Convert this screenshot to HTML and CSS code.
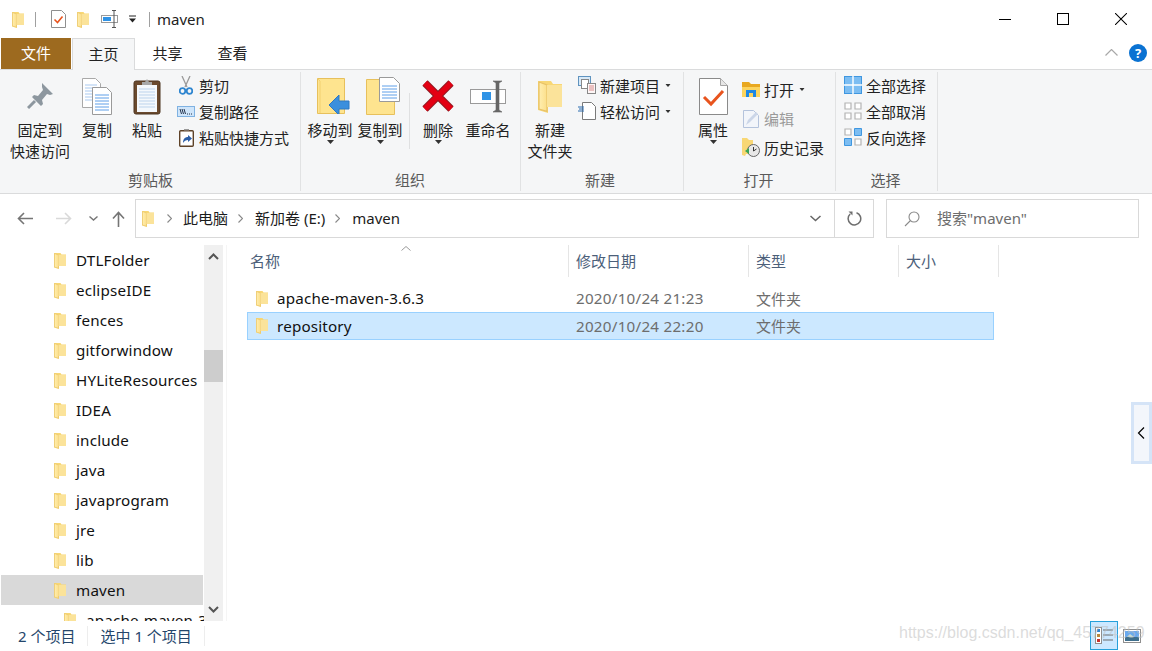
FILE: index.html
```html
<!DOCTYPE html>
<html lang="zh">
<head>
<meta charset="utf-8">
<title>maven</title>
<link rel="stylesheet" href="styles.css">
</head>
<body>
<svg class="defs" width="0" height="0" aria-hidden="true">
  <defs>
    <linearGradient id="fg" x1="0" x2="1" y1="0" y2="0"><stop offset="0" stop-color="#ffeeb0"/><stop offset="1" stop-color="#fcdf8a"/></linearGradient>
    <symbol id="folder" viewBox="0 0 12 17">
      <path d="M0 1h6.500l1 1.500H12V14H5v3L0 15.500z" fill="#f8d775"/>
      <path d="M.5 1.500 4.500 3v13.200L.5 15z" fill="url(#fg)" stroke="#e8c268" stroke-width=".6"/>
      <path d="M4.500 3H12V14H4.500z" fill="#fbe39a"/>
    </symbol>
    <symbol id="down" viewBox="0 0 7 4"><path d="M0 0h7L3.500 4z" fill="#333"/></symbol>
  </defs>
</svg>
<div class="window">

  <header class="titlebar">
    <svg class="ic-folder" width="12" height="17"><use href="#folder"/></svg>
    <span class="tb-sep"></span>
    <svg class="qa-check" width="15" height="18" viewBox="0 0 15 18"><path d="M.5.500h10l4 4v13H.500z" fill="#fff" stroke="#8f8f8f"/><path d="M3.500 9.500l3 3 5-6" fill="none" stroke="#e8541e" stroke-width="1.600"/></svg>
    <svg class="qa-folder" width="12" height="17"><use href="#folder"/></svg>
    <svg class="qa-rename" width="18" height="18" viewBox="0 0 18 18"><rect x=".5" y="5.500" width="16" height="7" fill="#fff" stroke="#9a9a9a"/><rect x="2" y="7" width="8" height="4" fill="#2f93e6"/><path d="M11 .5h4M11 17.500h4M13 1v16" stroke="#555" fill="none"/></svg>
    <svg class="qa-drop" width="7" height="8" viewBox="0 0 7 8"><path d="M0 1h7" stroke="#222"/><path d="M0 3.500h7L3.500 7.500z" fill="#222"/></svg>
    <span class="tb-sep tb-sep2"></span>
    <span class="title">maven</span>
    <div class="winctl">
      <svg width="12" height="12" viewBox="0 0 12 12"><path d="M0 6.500h12" stroke="#000"/></svg>
      <svg width="12" height="12" viewBox="0 0 12 12"><rect x=".5" y=".5" width="11" height="11" fill="none" stroke="#000"/></svg>
      <svg width="12" height="12" viewBox="0 0 12 12"><path d="M0 0l12 12M12 0 0 12" stroke="#000" stroke-width="1.050"/></svg>
    </div>
  </header>

  <nav class="tabs">
    <span class="tab tab-file">文件</span>
    <span class="tab tab-on">主页</span>
    <span class="tab">共享</span>
    <span class="tab">查看</span>
    <span class="tabs-fill"></span>
    <svg class="collapse" width="13" height="7" viewBox="0 0 13 7"><path d="M.5 6.500l6-6 6 6" fill="none" stroke="#a8a8a8" stroke-width="1.200"/></svg>
    <span class="help">?</span>
  </nav>

  <section class="ribbon">
    <div class="group g1">
      <div class="g-body">
        <div class="big w64">
          <span class="big-ic"><svg width="26" height="27" viewBox="0 0 26 27"><path d="M15 0l11 11-3 1-3-1-5 6 1 4-2 2L5 14l2-2 4 1 5-6-1-3z" fill="#8d979f"/><path d="M8 18 1 25" stroke="#8d979f" stroke-width="3"/></svg></span>
          <span class="big-t">固定到<br>快速访问</span>
        </div>
        <div class="big">
          <span class="big-ic"><svg width="30" height="37" viewBox="0 0 30 37"><path d="M.5.500h13l5 5v24H.500z" fill="#fff" stroke="#a9a9a9"/><path d="M3 7h12M3 10h12M3 13h12M3 16h12M3 19h12M3 22h12" stroke="#a9c9f0"/><path d="M10.500 9.500h14l5 5v22h-19z" fill="#fff" stroke="#9a9a9a"/><path d="M13 17h14M13 20h14M13 23h14M13 26h14M13 29h14M13 32h14" stroke="#5e9fe8"/></svg></span>
          <span class="big-t">复制</span>
        </div>
        <div class="big">
          <span class="big-ic"><svg width="28" height="37" viewBox="0 0 28 37"><rect x="1" y="3" width="26" height="33" rx="2" fill="#6b4a2e" stroke="#4d3520"/><rect x="4" y="7" width="20" height="27" fill="#f4f8fc"/><path d="M6 11h16M6 14h16M6 17h16M6 20h16M6 23h16M6 26h16M6 29h16" stroke="#bcd3ec"/><path d="M9 7V4h3l2-3 2 3h3v3z" fill="#a8a8a8"/></svg></span>
          <span class="big-t">粘贴</span>
        </div>
        <div class="smalls s-26 s-g1">
          <div class="sm"><span class="sm-ic"><svg width="14" height="19" viewBox="0 0 14 19"><path d="M3 0l5 11M11 0 6 11" stroke="#9a9a9a" stroke-width="1.300"/><circle cx="3.500" cy="15" r="2.800" fill="none" stroke="#2f86d0" stroke-width="1.800"/><circle cx="10.500" cy="15" r="2.800" fill="none" stroke="#2f86d0" stroke-width="1.800"/></svg></span>剪切</div>
          <div class="sm"><span class="sm-ic"><svg width="18" height="11" viewBox="0 0 18 11"><rect x=".5" y=".5" width="17" height="10" fill="#cfe5fa" stroke="#7fb2e2"/><path d="M3 3l1.500 5M5 3l1.500 5M7 3l1.500 5" stroke="#24324a" fill="none"/><path d="M10 8h1M12 8h1M14 8h1" stroke="#24324a"/></svg></span>复制路径</div>
          <div class="sm"><span class="sm-ic"><svg width="15" height="19" viewBox="0 0 15 19"><rect x=".7" y="2.700" width="13.600" height="15.600" rx="1" fill="#fff" stroke="#5e4228" stroke-width="1.400"/><path d="M5 2.500V1h5v1.500z" fill="#999"/><path d="M4 15c0-4 2-6 5-6V7l4 3.500L9 14v-2c-2 0-4 1-5 3z" fill="#2b5ea8"/></svg></span>粘贴快捷方式</div>
        </div>
      </div>
      <div class="g-label">剪贴板</div>
    </div>

    <div class="group g2">
      <div class="g-body">
        <div class="big">
          <span class="big-ic"><svg class="nudge" width="33" height="36" viewBox="0 0 33 36"><path d="M.5.500h27v35H.500z" fill="#fee48f" stroke="#e7c05c"/><path d="M.5.500 3 3v32" fill="none" stroke="#f2d070"/><path d="M12 27 22 17v6h10v8H22v6z" fill="#3b8fdd" stroke="#2f79c2"/></svg></span>
          <span class="big-t">移动到</span>
          <svg class="caret" width="7" height="4"><use href="#down"/></svg>
        </div>
        <div class="big">
          <span class="big-ic"><svg class="nudge" width="34" height="38" viewBox="0 0 34 38"><path d="M.5 2.500h28v35H.500z" fill="#fee48f" stroke="#e7c05c"/><path d="M13.500.5h14l6 6v18h-20z" fill="#fff" stroke="#9a9a9a"/><path d="M16 9h15M16 12h15M16 15h15M16 18h15M16 21h15" stroke="#5e9fe8"/></svg></span>
          <span class="big-t">复制到</span>
          <svg class="caret" width="7" height="4"><use href="#down"/></svg>
        </div>
        <span class="g-sep"></span>
        <div class="big">
          <span class="big-ic"><svg width="32" height="32" viewBox="0 0 32 32"><path d="M3 3l26 26M29 3 3 29" stroke="#8f1a22" stroke-width="7.500"/><path d="M3 3l26 26M29 3 3 29" stroke="#e30013" stroke-width="5.500"/></svg></span>
          <span class="big-t">删除</span>
          <svg class="caret" width="7" height="4"><use href="#down"/></svg>
        </div>
        <div class="big">
          <span class="big-ic"><svg width="36" height="33" viewBox="0 0 36 33"><rect x=".5" y="9.500" width="35" height="14" fill="#fff" stroke="#9a9a9a"/><rect x="12" y="12" width="9" height="8" fill="#2f93e6"/><path d="M23 1h9l-3 2v27l3 2h-9l3-2V3z" fill="#666" stroke="#666" stroke-width=".6"/></svg></span>
          <span class="big-t">重命名</span>
        </div>
      </div>
      <div class="g-label">组织</div>
    </div>

    <div class="group g3">
      <div class="g-body">
        <div class="big">
          <span class="big-ic"><svg width="24" height="34" viewBox="0 0 12 17"><use href="#folder"/></svg></span>
          <span class="big-t">新建<br>文件夹</span>
        </div>
        <div class="smalls s-26 s-g3">
          <div class="sm"><span class="sm-ic"><svg width="18" height="18" viewBox="0 0 18 18"><rect x=".5" y=".5" width="12" height="9" fill="#d8e9f7" stroke="#5f93bf"/><rect x="3.500" y="3.500" width="7" height="9" fill="#fff" stroke="#888"/><rect x="9.500" y="7.500" width="8" height="10" fill="#fdf6f6" stroke="#888"/><path d="M11 10h5M11 12h5M11 14h5" stroke="#d88b8b"/></svg></span>新建项目<svg class="mini" width="6" height="3" viewBox="0 0 7 4"><use href="#down"/></svg></div>
          <div class="sm"><span class="sm-ic"><svg width="18" height="18" viewBox="0 0 18 18"><path d="M4.500.5h9l4 4v13h-13z" fill="#fff" stroke="#7a7a7a"/><path d="M0 5h6M1 7h5M0 9h6" stroke="#2b6cb0"/></svg></span>轻松访问<svg class="mini" width="6" height="3" viewBox="0 0 7 4"><use href="#down"/></svg></div>
        </div>
      </div>
      <div class="g-label">新建</div>
    </div>

    <div class="group g4">
      <div class="g-body">
        <div class="big">
          <span class="big-ic"><svg width="29" height="37" viewBox="0 0 29 37"><path d="M.5.500h21l7 7v29H.500z" fill="#fff" stroke="#8a8a8a"/><path d="M21.500.5v7h7" fill="#e6e6e6" stroke="#a5a5a5"/><path d="M5 19l7 7 12-13" fill="none" stroke="#e8541e" stroke-width="3"/></svg></span>
          <span class="big-t">属性</span>
          <svg class="caret" width="7" height="4"><use href="#down"/></svg>
        </div>
        <div class="smalls s-29 s-g4">
          <div class="sm"><span class="sm-ic"><svg width="18" height="15" viewBox="0 0 18 15"><path d="M0 0h7l2 2h9v4H0z" fill="#e9a820"/><path d="M0 5h18v10H0z" fill="#fcd45e"/><path d="M4 15V8h10v7h-3v-4H7v4z" fill="#1e88e5"/></svg></span>打开<svg class="mini" width="6" height="3" viewBox="0 0 7 4"><use href="#down"/></svg></div>
          <div class="sm sm-off"><span class="sm-ic"><svg width="16" height="18" viewBox="0 0 16 18"><path d="M.5.500h10l5 5v12H.500z" fill="#f2f5fa" stroke="#b4c3dc"/><path d="M3 15l2-5 8-8 2 2-8 8z" fill="#cbd6e8"/></svg></span>编辑</div>
          <div class="sm"><span class="sm-ic"><svg width="18" height="19" viewBox="0 0 18 19"><path d="M0 0h5l2 2h4v14H4l-1 2-3-1z" fill="#f8d775"/><circle cx="11.500" cy="12.500" r="6" fill="#e8e8e8" stroke="#666"/><path d="M11.500 9v4l3-2" fill="none" stroke="#333"/><path d="M3 13l4-3v6z" fill="#3aa655"/></svg></span>历史记录</div>
        </div>
      </div>
      <div class="g-label">打开</div>
    </div>

    <div class="group g5">
      <div class="g-body">
        <div class="smalls s-26 s-g5">
          <div class="sm"><span class="sm-ic"><svg width="18" height="18" viewBox="0 0 18 18"><rect x=".5" y=".5" width="17" height="17" fill="#7cbdf2" stroke="#3f97e0"/><path d="M9 0v18M0 9h18" stroke="#fff" stroke-width="1.400"/></svg></span>全部选择</div>
          <div class="sm"><span class="sm-ic"><svg width="18" height="18" viewBox="0 0 18 18"><path d="M1 1h6v6H1zM11 1h6v6h-6zM1 11h6v6H1zM11 11h6v6h-6z" fill="#fff" stroke="#b4b4b4" stroke-width="1.200"/></svg></span>全部取消</div>
          <div class="sm"><span class="sm-ic"><svg width="18" height="18" viewBox="0 0 18 18"><path d="M1 1h6v6H1zM11 11h6v6h-6z" fill="#fff" stroke="#b4b4b4" stroke-width="1.200"/><path d="M10.500.5h7v7h-7zM.5 10.500h7v7h-7z" fill="#7cbdf2" stroke="#3f97e0"/></svg></span>反向选择</div>
        </div>
      </div>
      <div class="g-label">选择</div>
    </div>
  </section>

  <section class="addr">
    <svg class="ar-back" width="16" height="13" viewBox="0 0 16 13"><path d="M16 6.500H2M7 1 1.500 6.500 7 12" fill="none" stroke="#757575" stroke-width="1.600"/></svg>
    <svg class="ar-fwd" width="16" height="13" viewBox="0 0 16 13"><path d="M0 6.500h14M9 1l5.500 5.500L9 12" fill="none" stroke="#d9d9d9" stroke-width="1.600"/></svg>
    <svg class="ar-hist" width="9" height="5" viewBox="0 0 9 5"><path d="M.5.500l4 3.500 4-3.500" fill="none" stroke="#777" stroke-width="1.400"/></svg>
    <svg class="ar-up" width="13" height="16" viewBox="0 0 13 16"><path d="M6.500 16V2M1 7.500l5.500-6 5.500 6" fill="none" stroke="#757575" stroke-width="1.600"/></svg>
    <div class="addr-box">
      <svg class="ab-folder" width="12" height="17"><use href="#folder"/></svg>
      <svg class="crumb-sep first" width="5" height="9" viewBox="0 0 5 9"><path d="M.5.500l4 4-4 4" fill="none" stroke="#888" stroke-width="1.100"/></svg>
      <span class="crumb">此电脑</span>
      <svg class="crumb-sep" width="5" height="9" viewBox="0 0 5 9"><path d="M.5.500l4 4-4 4" fill="none" stroke="#888" stroke-width="1.100"/></svg>
      <span class="crumb">新加卷 (E:)</span>
      <svg class="crumb-sep" width="5" height="9" viewBox="0 0 5 9"><path d="M.5.500l4 4-4 4" fill="none" stroke="#888" stroke-width="1.100"/></svg>
      <span class="crumb">maven</span>
      <svg class="ab-drop" width="11" height="7" viewBox="0 0 11 7"><path d="M.5 1l5 4.500 5-4.500" fill="none" stroke="#666" stroke-width="1.500"/></svg>
      <span class="ab-refresh"><svg width="15" height="15" viewBox="0 0 15 15"><path d="M9.500 1.700A6.300 6.300 0 1 1 3.200 3" fill="none" stroke="#6e6e6e" stroke-width="1.500"/><path d="M1.500 .5h4v4z" fill="#6e6e6e"/></svg></span>
    </div>
    <div class="search-box">
      <svg width="16" height="16" viewBox="0 0 16 16"><circle cx="10" cy="6" r="5" fill="none" stroke="#8a8a8a" stroke-width="1.100"/><path d="M6.500 9.500 1 15" stroke="#8a8a8a" stroke-width="1.100"/></svg>
      <span class="search-t">搜索"maven"</span>
    </div>
  </section>

  <main class="content">
    <aside class="navpane">
      <div class="navlist">
        <div class="nrow"><svg width="12" height="17"><use href="#folder"/></svg><span>DTLFolder</span></div>
        <div class="nrow"><svg width="12" height="17"><use href="#folder"/></svg><span>eclipseIDE</span></div>
        <div class="nrow"><svg width="12" height="17"><use href="#folder"/></svg><span>fences</span></div>
        <div class="nrow"><svg width="12" height="17"><use href="#folder"/></svg><span>gitforwindow</span></div>
        <div class="nrow"><svg width="12" height="17"><use href="#folder"/></svg><span>HYLiteResources</span></div>
        <div class="nrow"><svg width="12" height="17"><use href="#folder"/></svg><span>IDEA</span></div>
        <div class="nrow"><svg width="12" height="17"><use href="#folder"/></svg><span>include</span></div>
        <div class="nrow"><svg width="12" height="17"><use href="#folder"/></svg><span>java</span></div>
        <div class="nrow"><svg width="12" height="17"><use href="#folder"/></svg><span>javaprogram</span></div>
        <div class="nrow"><svg width="12" height="17"><use href="#folder"/></svg><span>jre</span></div>
        <div class="nrow"><svg width="12" height="17"><use href="#folder"/></svg><span>lib</span></div>
        <div class="nrow nrow-sel"><svg width="12" height="17"><use href="#folder"/></svg><span>maven</span></div>
        <div class="nrow nrow-child"><svg width="12" height="17"><use href="#folder"/></svg><span>apache-maven-3.6.3</span></div>
      </div>
      <div class="scrollbar">
        <span class="sb-btn"><svg width="11" height="7" viewBox="0 0 11 7"><path d="M1 6l4.500-4.500L10 6" fill="none" stroke="#555" stroke-width="2"/></svg></span>
        <span class="sb-track"><span class="sb-thumb"></span></span>
        <span class="sb-btn"><svg width="11" height="7" viewBox="0 0 11 7"><path d="M1 1l4.500 4.500L10 1" fill="none" stroke="#555" stroke-width="2"/></svg></span>
      </div>
    </aside>
    <div class="files">
      <div class="cols">
        <div class="col c-name">名称<svg class="sort" width="10" height="5" viewBox="0 0 10 5"><path d="M.5 4.500 5 .5l4.500 4" fill="none" stroke="#9a9a9a"/></svg></div>
        <div class="col c-date">修改日期</div>
        <div class="col c-type">类型</div>
        <div class="col c-size">大小</div>
      </div>
      <div class="frow">
        <span class="f-name"><svg width="12" height="17"><use href="#folder"/></svg>apache-maven-3.6.3</span>
        <span class="f-date">2020/10/24 21:23</span>
        <span class="f-type">文件夹</span>
      </div>
      <div class="frow frow-sel">
        <span class="f-name"><svg width="12" height="17"><use href="#folder"/></svg>repository</span>
        <span class="f-date">2020/10/24 22:20</span>
        <span class="f-type">文件夹</span>
      </div>
    </div>
    <div class="panetab"><svg width="8" height="12" viewBox="0 0 8 12"><path d="M7 .5 1.500 6 7 11.500" fill="none" stroke="#000" stroke-width="1.200"/></svg></div>
  </main>

  <footer class="status">
    <span class="st st1">2 个项目</span>
    <span class="st st2">选中 1 个项目</span>
    <span class="st-fill"></span>
    <span class="view view-on"><svg width="19" height="17" viewBox="0 0 19 17"><rect x=".5" y=".5" width="6" height="16" fill="#fff" stroke="#8f8f8f"/><path d="M2 2h3v3H2z" fill="#2f86d0"/><path d="M2 7h3v3H2z" fill="#b9863c"/><path d="M2 12h3v3H2z" fill="#c9302c"/><path d="M8 3h10M8 8h10M8 13h10" stroke="#6a6a6a" stroke-width="1.200"/></svg></span>
    <span class="view"><svg width="18" height="14" viewBox="0 0 18 14"><rect x=".5" y=".5" width="17" height="13" fill="#fff" stroke="#8f8f8f"/><rect x="2" y="2" width="14" height="6" fill="#6aa9ef"/><rect x="2" y="8" width="14" height="4" fill="#3f6f8c"/><path d="M4 8l3-3 4 3z" fill="#c9dcd2"/></svg></span>
    <span class="watermark">https://blog.csdn.net/qq_45774259</span>
  </footer>
</div>
</body>
</html>
```
FILE: styles.css
```css
* { box-sizing: border-box; }
html, body { margin: 0; padding: 0; background: #fff; overflow: hidden; }
body { font-family: "Noto Sans", "Noto Sans CJK SC", sans-serif; font-size: 15px; color: #1c1c1c; }
svg { display: block; flex: none; }
.defs { position: absolute; }
.window { width: 1152px; height: 651px; display: flex; flex-direction: column; position: relative; overflow: hidden; }

/* title bar */
.titlebar { height: 38px; display: flex; align-items: center; padding-left: 12px; flex: none; }
.tb-sep { width: 1px; height: 15px; background: #a0a0a0; margin-left: 11px; }
.qa-check { margin-left: 15px; }
.qa-folder { margin-left: 11px; }
.qa-rename { margin-left: 12px; }
.qa-drop { margin-left: 10px; }
.tb-sep2 { margin-left: 13px; }
.title { margin-left: 7px; font-size: 15px; color: #222; }
.winctl { margin-left: auto; display: flex; gap: 46px; padding-right: 25px; }

/* tabs */
.tabs { height: 32px; display: flex; align-items: stretch; flex: none; padding-left: 1px; border-bottom: 1px solid #dadbdc; }
.tab { width: 65px; padding-bottom: 2px; display: flex; align-items: center; justify-content: center; font-size: 15px; color: #222; }
.tab-file { width: 70px; background: #9d6a1f; color: #fff; margin-bottom: -1px; height: 31px; }
.tab-on { width: 63px; margin-left: 1px; background: #f5f6f7; border: 1px solid #dadbdc; border-bottom: 0; margin-bottom: -1px; height: 32px; }
.tabs-fill { flex: 1; }
.collapse { align-self: center; margin: 0 11px 3px 0; }
.help { align-self: center; width: 18px; height: 18px; border-radius: 50%; background: #0a72d2; color: #fff; font-weight: 700; font-size: 13px; line-height: 18px; text-align: center; margin: 0 5px 2px 0; }

/* ribbon */
.ribbon { height: 124px; background: #f5f6f7; border-bottom: 1px solid #dadbdc; display: flex; padding-left: 1px; flex: none; }
.group { display: flex; flex-direction: column; border-right: 1px solid #e1e2e3; margin-top: 2px; margin-bottom: 2px; }
.g-body { flex: 1; display: flex; align-items: flex-start; }
.g-label { height: 20px; margin-bottom: 1px; line-height: 20px; text-align: center; color: #5a5a5a; font-size: 15px; }
.g1 { width: 300px; }
.g1 .g-body { padding-left: 7px; }
.g2 { width: 220px; }
.g2 .g-body { padding-left: 4px; }
.g2 .g-label { padding-right: 1px; }
.g3 { width: 163px; }
.g3 .g-body { padding-left: 4px; }
.g3 .g-label { padding-right: 4px; }
.g4 { width: 152px; }
.g4 .g-body { padding-left: 4px; }
.g4 .g-label { padding-right: 2px; }
.g5 { width: 102px; }
.g5 .g-label { padding-right: 2px; }
.big { width: 50px; display: flex; flex-direction: column; align-items: center; }
.w64 { width: 64px; }
.big-ic { height: 48px; display: flex; align-items: center; justify-content: center; }
.nudge { margin-left: 6px; }
.big-t { line-height: 21px; text-align: center; white-space: nowrap; color: #222; }
.caret { margin-top: -1px; }
.g-sep { width: 1px; height: 56px; background: #dfe0e1; margin: 21px 3px 0 4px; }
.smalls { display: flex; flex-direction: column; }
.s-26 .sm { height: 26px; }
.s-29 .sm { height: 29px; }
.s-g1 { margin: 0 0 0 5px; }
.s-g3 { margin: 0 0 0 3px; }
.s-g4 { margin: 3px 0 0 4px; }
.s-g5 { margin: 0 0 0 8px; }
.sm { display: flex; align-items: center; white-space: nowrap; color: #222; }
.sm-ic { width: 18px; margin-right: 4px; display: flex; justify-content: center; }
.sm-off { color: #9a9a9a; }
.mini { margin-left: 5px; }

/* address row */
.addr { height: 44px; display: flex; align-items: center; flex: none; padding: 5px 13px 0 17px; }
.ar-fwd { margin-left: 23px; }
.ar-hist { margin-left: 17px; }
.ar-up { margin-left: 14px; }
.addr-box { margin-left: 10px; width: 739px; height: 39px; border: 1px solid #d9d9d9; display: flex; align-items: center; padding-left: 6px; }
.crumb-sep { margin: 0 12px 0 10px; }
.crumb-sep.first { margin: 0 11px 0 13px; }
.crumb { font-size: 15px; color: #1c1c1c; white-space: nowrap; padding-bottom: 2px; }
.ab-drop { margin-left: auto; margin-right: 13px; }
.ab-refresh { width: 39px; height: 37px; border-left: 1px solid #d9d9d9; display: flex; align-items: center; justify-content: center; }
.search-box { margin-left: 12px; width: 253px; height: 39px; border: 1px solid #d9d9d9; display: flex; align-items: center; padding-left: 17px; color: #6d6d6d; gap: 17px; }
.search-t { padding-bottom: 2px; }

/* content */
.content { flex: 1; display: flex; position: relative; min-height: 0; padding-top: 7px; }
.navpane { width: 223px; flex: none; display: flex; overflow: hidden; }
.navlist { width: 204px; flex: none; overflow: hidden; padding-left: 1px; }
.nrow { height: 30px; display: flex; align-items: center; padding-left: 53px; gap: 10px; white-space: nowrap; width: 202px; color: #111; font-size: 15.2px; letter-spacing: .18px; }
.nrow-sel { background: #d9d9d9; }
.nrow-child { padding-left: 63px; }
.scrollbar { width: 19px; flex: none; background: #f0f0f0; display: flex; flex-direction: column; }
.sb-btn { height: 17px; flex: none; display: flex; align-items: center; justify-content: center; margin: 3px 0; }
.sb-track { flex: 1; display: block; padding-top: 82px; }
.sb-thumb { display: block; width: 19px; height: 32px; background: #cdcdcd; }
.files { flex: 1; margin-left: 3px; border-left: 1px solid #f5f5f5; display: flex; flex-direction: column; }
.cols { display: flex; height: 32px; padding-left: 20px; flex: none; margin-bottom: 8px; }
.col { padding: 0 0 2px 7px; display: flex; align-items: center; border-right: 1px solid #e5e5e5; color: #4c607a; position: relative; }
.c-name { width: 322px; padding-left: 3px; }
.c-date { width: 180px; }
.c-type { width: 150px; }
.c-size { width: 100px; }
.sort { position: absolute; left: 154px; top: 1px; }
.frow { height: 27px; display: flex; align-items: center; margin-left: 20px; width: 747px; padding: 0 0 1px 1px; border: 1px solid transparent; white-space: nowrap; font-size: 15.2px; letter-spacing: .18px; }
.frow-sel { height: 28px; background: #cce8ff; border-color: #99d1ff; }
.f-name { width: 327px; display: flex; align-items: center; gap: 9px; padding-left: 7px; color: #111; }
.f-date { width: 180px; color: #6d6d6d; letter-spacing: .25px; }
.f-type { color: #6d6d6d; font-size: 15px; letter-spacing: 0; }
.panetab { position: absolute; right: 0; top: 164px; width: 21px; height: 62px; padding-right: 2px; background: #f3f6fb; border: 3px solid #d5e4f7; display: flex; align-items: center; justify-content: center; }

/* status */
.status { height: 30px; flex: none; display: flex; align-items: center; position: relative; padding: 0 11px 0 18px; color: #24466b; }
.st { padding-right: 12px; border-right: 1px solid #ededed; line-height: 20px; }
.st2 { margin-left: 12px; }
.st-fill { flex: 1; }
.view { display: flex; align-items: center; justify-content: center; }
.view-on { width: 28px; height: 29px; align-self: flex-start; background: #cce8ff; border: 1px solid #26a0da; margin-right: 5px; }
.watermark { position: absolute; left: 899px; top: 3px; color: rgba(190,190,190,.55); font-family: "Liberation Sans", sans-serif; font-size: 16px; white-space: nowrap; }
```
